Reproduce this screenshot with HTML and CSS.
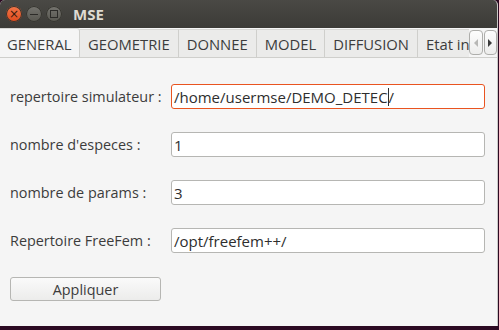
FILE: index.html
```html
<!DOCTYPE html>
<html lang="fr">
<head>
    <meta charset="UTF-8">
    <title>MSE</title>
    <link rel="stylesheet" href="styles.css">
</head>
<body>
    <div class="window">
        <div class="titlebar">
            <div class="controls">
                <span class="btn close">×</span>
                <span class="btn minimize"><span class="bar"></span></span>
                <span class="btn maximize"><span class="box"></span></span>
            </div>
            <div class="title">MSE</div>
        </div>
        <div class="tabbar">
            <div class="tabs">
                <div class="tab active">GENERAL</div>
                <div class="tab">GEOMETRIE</div>
                <div class="tab">DONNEE</div>
                <div class="tab">MODEL</div>
                <div class="tab">DIFFUSION</div>
                <div class="tab">Etat in</div>
            </div>
            <div class="scroller">
                <span class="arrow left disabled"></span>
                <span class="arrow right"></span>
            </div>
        </div>
        <div class="panel">
            <div class="row">
                <label>repertoire simulateur :</label>
                <div class="field focused">/home/usermse/DEMO_DETEC<span class="caret"></span>/</div>
            </div>
            <div class="row">
                <label>nombre d'especes :</label>
                <div class="field">1</div>
            </div>
            <div class="row">
                <label>nombre de params :</label>
                <div class="field">3</div>
            </div>
            <div class="row">
                <label>Repertoire FreeFem :</label>
                <div class="field">/opt/freefem++/</div>
            </div>
            <button class="apply">Appliquer</button>
        </div>
    </div>
</body>
</html>
```

FILE: styles.css
```css
body {
    margin: 0;
    background: #2c0a22;
    font-family: 'Open Sans', 'Noto Sans', sans-serif;
    width: 499px;
    height: 330px;
    overflow: hidden;
}

.window {
    width: 497px;
    height: 326px;
    background: #f5f5f5;
    border-right: 1px solid #c9c9c6;
    border-radius: 5px 5px 0 0;
    overflow: hidden;
    display: flex;
    flex-direction: column;
}

/* title bar */
.titlebar {
    height: 28px;
    flex-shrink: 0;
    background: linear-gradient(#4a4945, #3c3b37);
    display: flex;
    align-items: center;
    padding-left: 6px;
}

.controls {
    display: flex;
    gap: 4px;
}

.btn {
    width: 16px;
    height: 16px;
    border-radius: 50%;
    display: flex;
    align-items: center;
    justify-content: center;
    background: linear-gradient(#75746f, #57564f);
    box-shadow: inset 0 0 0 1px #35342f;
}

.btn.close {
    background: linear-gradient(#f2774a, #df4a1c);
    color: #3b1a0c;
    font-size: 12px;
    line-height: 1;
    font-family: 'DejaVu Sans', sans-serif;
}

.btn .bar {
    width: 8px;
    height: 1px;
    background: #2c2b28;
}

.btn .box {
    width: 6px;
    height: 6px;
    border: 1px solid #2c2b28;
}

.title {
    margin-left: 11px;
    color: #dfdbd2;
    font-weight: bold;
    font-size: 15px;
}

/* tabs */
.tabbar {
    height: 30px;
    flex-shrink: 0;
    display: flex;
    background: #f5f5f5;
}

.tabs {
    flex: 1;
    min-width: 0;
    display: flex;
    overflow: hidden;
    border-bottom: 1px solid #cfcfcc;
    align-items: flex-end;
}

.tab {
    height: 27px;
    padding: 0 8px;
    display: flex;
    align-items: center;
    font-size: 14.8px;
    color: #3c3c3c;
    background: #ebebea;
    border-right: 1px solid #cfcfcc;
    border-top: 1px solid #d7d7d4;
    white-space: nowrap;
    flex-shrink: 0;
}

.tab.active {
    height: 29px;
    background: #f5f5f5;
    margin-bottom: -1px;
    padding: 0 7px;
    width: 65px;
    border-top-right-radius: 3px;
}

.scroller {
    flex-shrink: 0;
    width: 28px;
    display: flex;
    gap: 1px;
    padding: 2px 0;
    border-bottom: 1px solid #cfcfcc;
}

.arrow {
    flex: 1;
    box-sizing: border-box;
    border: 1px solid #aeaeab;
    border-radius: 4px;
    background: linear-gradient(#fdfdfd, #ededec);
    display: flex;
    align-items: center;
    justify-content: center;
}

.arrow::after {
    content: "";
    border-top: 4px solid transparent;
    border-bottom: 4px solid transparent;
}

.arrow.left::after {
    border-right: 4px solid #3c3c3c;
}

.arrow.right::after {
    border-left: 4px solid #3c3c3c;
}

.arrow.disabled::after {
    border-right-color: #b8b8b6;
}

/* form */
.panel {
    padding: 26px 12px 0 10px;
    display: flex;
    flex-direction: column;
    gap: 23px;
}

.row {
    display: flex;
    align-items: center;
    height: 25px;
}

.row label {
    width: 161px;
    font-size: 14.4px;
    color: #3c3c3c;
}

.field {
    flex: 1;
    height: 25px;
    box-sizing: border-box;
    border: 1px solid #b6b6b3;
    border-radius: 3px;
    background: #ffffff;
    padding: 0 2px;
    display: flex;
    align-items: center;
    font-size: 15px;
    color: #2e2e2e;
}

.field.focused {
    border-color: #e95420;
}

.caret {
    width: 1px;
    height: 18px;
    background: #2e2e2e;
}

.apply {
    width: 151px;
    height: 24px;
    margin-top: 1px;
    border: 1px solid #b6b6b3;
    border-radius: 3px;
    background: linear-gradient(#fafafa, #ececeb);
    font-family: 'Open Sans', 'Noto Sans', sans-serif;
    font-size: 14.4px;
    color: #3c3c3c;
    padding: 0;
}
```
